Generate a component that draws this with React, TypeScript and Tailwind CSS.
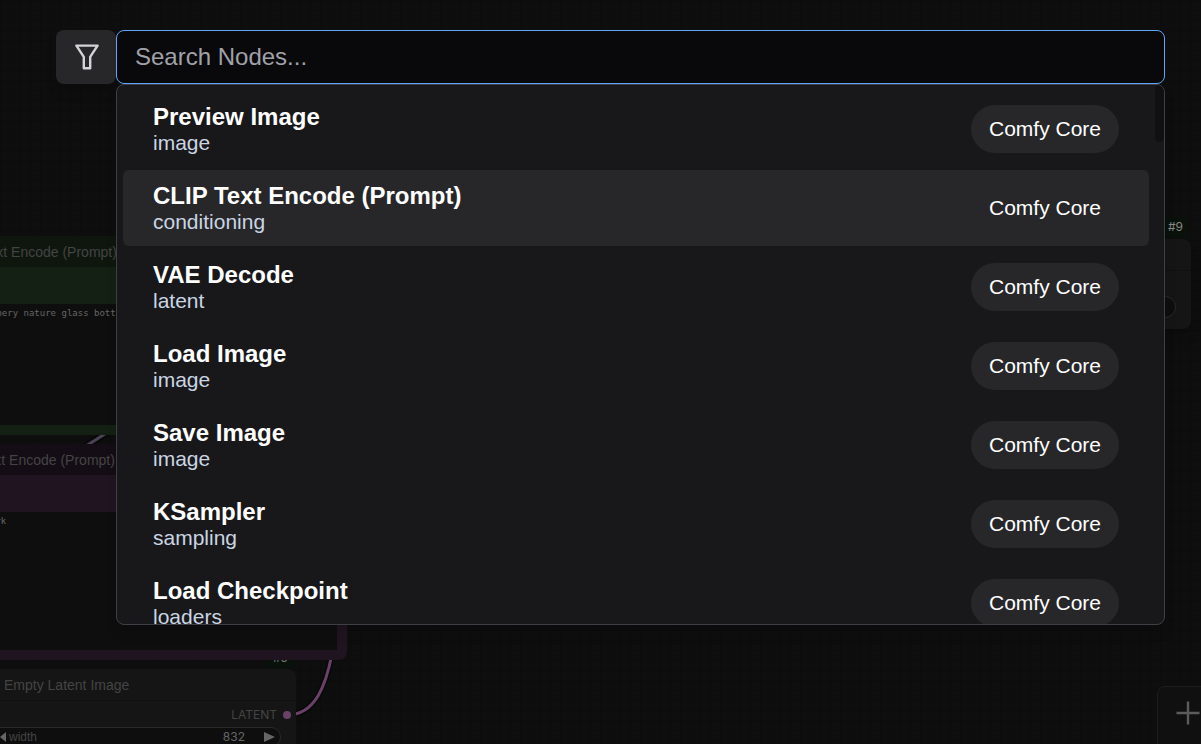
import { clsx } from 'clsx';

interface NodeDef {
  name: string;
  category: string;
  source: string;
}

const NODES: NodeDef[] = [
  { name: 'Preview Image', category: 'image', source: 'Comfy Core' },
  { name: 'CLIP Text Encode (Prompt)', category: 'conditioning', source: 'Comfy Core' },
  { name: 'VAE Decode', category: 'latent', source: 'Comfy Core' },
  { name: 'Load Image', category: 'image', source: 'Comfy Core' },
  { name: 'Save Image', category: 'image', source: 'Comfy Core' },
  { name: 'KSampler', category: 'sampling', source: 'Comfy Core' },
  { name: 'Load Checkpoint', category: 'loaders', source: 'Comfy Core' },
];

const FOCUSED = 1;

function FilterIcon() {
  return (
    <svg
      viewBox="0 0 24 26"
      className="ml-px h-[26px] w-6"
      fill="none"
      stroke="currentColor"
      strokeWidth="2.4"
      strokeLinejoin="round"
      aria-hidden="true"
    >
      <path d="M1.4 1.6H22.6L15.2 12.8V24.2H8.8V12.8Z" />
    </svg>
  );
}

// Nodes sit on a free canvas, so they are placed by coordinates.
function GraphCanvas() {
  return (
    <div
      aria-hidden="true"
      className="absolute inset-0 overflow-hidden bg-[#0e0e0e] bg-[linear-gradient(#0c0c0c_1px,transparent_1px),linear-gradient(90deg,#0c0c0c_1px,transparent_1px)] bg-size-[10px_10px] text-[#444444]"
    >
      <svg className="absolute inset-0 h-full w-full" fill="none">
        <path d="M86 446L108 432" stroke="#080808" strokeWidth="7" />
        <path d="M86 446L108 432" stroke="#4b4259" strokeWidth="3" />
        <path d="M287 715C316 715 326 684 332 654" stroke="#080808" strokeWidth="6" />
        <path d="M287 715C316 715 326 684 332 654" stroke="#6a4168" strokeWidth="3" />
      </svg>

      <div className="absolute top-[236px] -left-20 flex h-[199px] w-[427px] flex-col rounded-lg bg-[#132013] pb-[10px]">
        <div className="h-[31px] rounded-t-lg bg-[#0e160e] pl-[27px] text-sm leading-8">
          CLIP Text Encode (Prompt)
        </div>
        <div className="mt-[37px] mr-[10px] flex-1 bg-[#0e0e0e] pt-[3px] pl-[6px] font-['DejaVu_Sans_Mono',monospace] text-[9px] leading-3 whitespace-pre text-[#666666]">
          beautiful scenery nature glass bott
        </div>
      </div>

      <span className="absolute top-[648px] left-[267px] rounded-md bg-[#08120a] px-[6px] font-[Inter,sans-serif] text-xs leading-5 text-[#777777]">
        #5
      </span>

      <div className="absolute top-[444px] -left-20 flex h-[216px] w-[427px] flex-col rounded-lg bg-[#201420] pb-[10px]">
        <div className="h-[31px] rounded-t-lg bg-[#150d15] pl-[25px] text-sm leading-8">
          CLIP Text Encode (Prompt)
        </div>
        <div className="mt-[37px] mr-[10px] flex-1 bg-[#0e0e0e] pt-[3px] pl-[5px] font-['DejaVu_Sans_Mono',monospace] text-[9px] leading-3 whitespace-pre text-[#666666]">
          text, watermark
        </div>
      </div>

      <div className="absolute top-[669px] -left-20 w-[376px] rounded-lg bg-[#151515] pb-10">
        <div className="h-8 border-b border-[#111111] pl-[84px] text-sm leading-8">Empty Latent Image</div>
        <div className="flex h-[26px] items-center justify-end gap-[6px] pt-[2px] pr-[5px] font-[Inter,sans-serif] text-xs">
          LATENT
          <span className="h-2 w-2 rounded-full bg-[#6a4168]" />
        </div>
        <div className="mr-[15px] flex h-5 items-center rounded-full border border-[#292929] bg-[#0e0e0e] pr-[5px] pl-[79px] text-xs">
          <svg viewBox="0 0 6 10" className="h-[10px] w-[6px]" fill="#666666">
            <path d="M6 0L0 5L6 10Z" />
          </svg>
          <span className="pl-[3px]">width</span>
          <span className="ml-auto pr-[19px] font-[Inter,sans-serif] text-[#666666]">832</span>
          <svg viewBox="0 0 11 10" className="h-[10px] w-[11px]" fill="#666666">
            <path d="M0 0L11 5L0 10Z" />
          </svg>
        </div>
      </div>

      <span className="absolute top-[217px] right-[13px] rounded-md bg-[#08120a] px-[5px] font-[Inter,sans-serif] text-xs leading-5 text-[#888888]">
        #9
      </span>
      <div className="absolute top-[239px] right-[10px] h-[90px] w-60 rounded-lg bg-[#151515] shadow-lg">
        <div className="h-8 border-b border-[#111111]" />
        <div className="mt-[25px] mr-[15px] h-[22px] rounded-full border border-[#292929] bg-[#0e0e0e]" />
      </div>
    </div>
  );
}

function NodeOption({ node, focused }: { node: NodeDef; focused: boolean }) {
  return (
    <li
      role="option"
      aria-selected={focused}
      className={clsx(
        'flex h-[76px] shrink-0 cursor-pointer items-center justify-between rounded-md px-[30px]',
        focused && 'bg-[#27272a]',
      )}
    >
      <div>
        <div className="text-2xl leading-7 font-bold text-white">{node.name}</div>
        <div className="text-[21px] leading-6 text-slate-300">{node.category}</div>
      </div>
      <span className="rounded-full bg-[#27272a] px-[18px] text-[21px] leading-[48px] text-white">
        {node.source}
      </span>
    </li>
  );
}

export default function App() {
  return (
    <div className="relative min-h-screen overflow-hidden font-['Liberation_Sans',Arial,sans-serif]">
      <GraphCanvas />

      <main className="relative flex items-start pt-[30px] pr-9 pl-14">
        <button
          type="button"
          aria-label="Add filter"
          className="flex h-[54px] w-[60px] shrink-0 items-center justify-center rounded-lg bg-[#27272a] text-[#d4d4d8] shadow-lg"
        >
          <FilterIcon />
        </button>
        <div className="min-w-0 flex-1">
          <input
            type="text"
            aria-label="Search nodes"
            placeholder="Search Nodes..."
            className="block h-[54px] w-full rounded-lg border border-[#60a5fa] bg-[#09090b] px-[18px] text-2xl text-white outline-none placeholder:text-[#a1a1aa]"
          />
          <div className="flex max-h-[541px] overflow-hidden rounded-lg border border-[#3f3f46] bg-[#18181b] shadow-lg">
            <ul role="listbox" aria-label="Nodes" className="flex min-w-0 flex-1 flex-col gap-[3px] p-[6px]">
              {NODES.map((node, i) => (
                <NodeOption key={node.name} node={node} focused={i === FOCUSED} />
              ))}
            </ul>
            <div className="h-[57px] w-[9px] shrink-0 rounded-full bg-[#101012]" />
          </div>
        </div>
      </main>

      <button
        type="button"
        aria-label="Zoom in"
        className="absolute -right-[18px] bottom-0 flex h-[58px] w-[62px] items-start justify-center rounded-t-lg border border-b-0 border-[#1c1c1e] bg-[#101010] pt-[14px] text-[#5c5c5c]"
      >
        <svg viewBox="0 0 24 24" className="h-6 w-6" stroke="currentColor" strokeWidth="2.4" aria-hidden="true">
          <path d="M12 0.5V23.5M0.5 12H23.5" />
        </svg>
      </button>
    </div>
  );
}
